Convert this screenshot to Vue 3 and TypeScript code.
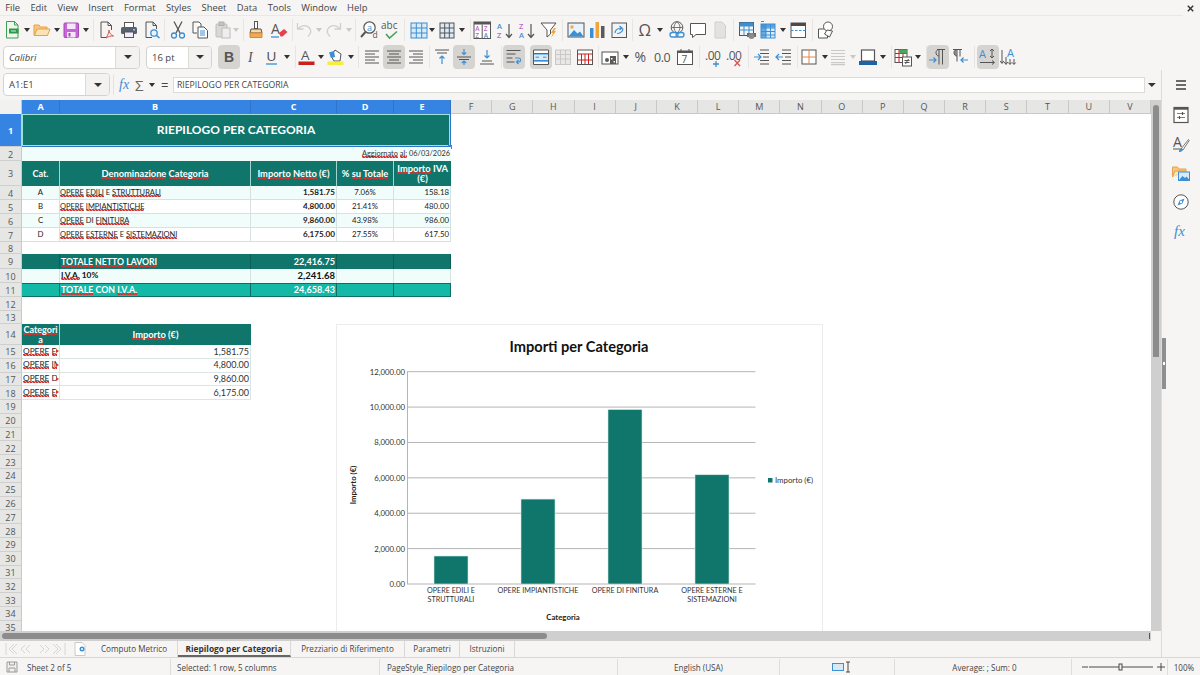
<script setup lang="ts">
type Item = { n: string; c: number; on?: boolean };
const d = '#555';
const b = '#3b8fd4';
const ff = `font-family="Open Sans, sans-serif"`;
const I: Record<string, string> = {
  new: `<path d="M4.500 1.500h8l3.500 3.500v13H4.500z" fill="#eef8f0" stroke="#3f9f52"/><path d="M12.500 1.500V5H16" fill="none" stroke="#3f9f52"/><rect x="7" y="8.500" width="9.500" height="5" fill="#2e9a48"/><path d="M9 11h5" stroke="#cfeed6"/>`,
  open: `<path d="M2 15.500V5h5l1.500 2H15v8.500z" fill="#f8c67e" stroke="#e4a24a"/><path d="M2.500 15.500 5 9h13l-2.500 6.500z" fill="#fde2b4" stroke="#e4a24a"/>`,
  save: `<rect x="3" y="3" width="14.500" height="14.500" rx="1" fill="#c766d6" stroke="#a44bb5"/><rect x="6" y="3.500" width="8.500" height="5.500" fill="#f6e6f9"/><rect x="6" y="12" width="8.500" height="5.500" fill="#f6e6f9"/><rect x="7.500" y="13" width="2" height="3.500" fill="#a44bb5"/>`,
  pdf: `<path d="M5 2h7l3.500 3.500V10M5 2v15.500h6" fill="none" stroke="${d}"/><path d="M12 2v3.500h3.500" fill="none" stroke="${d}"/><path d="M10 18c2-3 3-6 3-8 0 3 2 5 4.500 6-2.500-.3-5 .5-7.500 2z" fill="none" stroke="#d9534f"/>`,
  print: `<rect x="5.500" y="2.500" width="9" height="5" fill="#fff" stroke="${d}"/><rect x="2" y="7" width="16" height="7" rx="1.500" fill="#56636e"/><rect x="5.500" y="12" width="9" height="5.500" fill="#eef" stroke="${d}"/><rect x="14" y="9" width="2" height="1.500" fill="#8fc4ea"/>`,
  preview: `<path d="M4 2h7l3.500 3.500V9M4 2v15.500h6" fill="none" stroke="${d}"/><path d="M11 2v3.500h3.500" fill="none" stroke="${d}"/><circle cx="12" cy="13" r="3.200" fill="#e8f3fb" stroke="${b}" stroke-width="1.300"/><path d="m14.500 15.500 3 2.500" stroke="${b}" stroke-width="1.600"/>`,
  cut: `<path d="M6 1.500 12 13M14 1.500 8 13" stroke="${d}" stroke-width="1.300" fill="none"/><circle cx="6" cy="15.500" r="2.500" fill="none" stroke="${b}" stroke-width="1.300"/><circle cx="14" cy="15.500" r="2.500" fill="none" stroke="${b}" stroke-width="1.300"/>`,
  copy: `<path d="M3 2h6l2 2v3M3 2v11h4" fill="#fff" stroke="${d}"/><path d="M8 7h6l3.500 3.500V18H8z" fill="#fff" stroke="${d}"/><path d="M10 11h5M10 13h5M10 15h5" stroke="${b}"/>`,
  paste: `<rect x="3" y="4" width="11" height="13" rx="1" fill="#d8d8d8" stroke="#bdbdbd"/><rect x="6" y="2" width="5" height="3.500" fill="#c4c4c4" stroke="#b0b0b0"/><rect x="9" y="8" width="8" height="10" fill="#eee" stroke="#bdbdbd"/>`,
  clone: `<rect x="8.500" y="1.500" width="3" height="7" fill="#fff" stroke="${d}"/><path d="M5 9h10l1 4H4z" fill="#f9d9a8" stroke="${d}"/><path d="M4 13h12v4.500H4z" fill="#f4a950" stroke="#d98a2e"/>`,
  clear: `<text x="2" y="14" font-size="14" fill="${d}" ${ff}>A</text><path d="M2 17h8" stroke="${b}" stroke-width="1.300"/><path d="m10 13 5-4 3.500 3-5 4.500h-2z" fill="#e2434a"/>`,
  undo: `<path d="M3.500 3v6h6M4 9c3-4 8-4.500 11-1.500 2.500 2.500 2 6-1 9" fill="none" stroke="#cfcfcf" stroke-width="1.300"/>`,
  redo: `<path d="M16.500 3v6h-6M16 9c-3-4-8-4.500-11-1.500-2.500 2.500-2 6 1 9" fill="none" stroke="#cfcfcf" stroke-width="1.300"/>`,
  find: `<circle cx="10.500" cy="7.500" r="5.700" fill="#fff" stroke="${d}" stroke-width="1.200"/><path d="m6.500 12-4.500 5" stroke="${d}" stroke-width="2"/><text x="8" y="10.500" font-size="9" fill="${b}" ${ff}>a</text><text x="13.500" y="18" font-size="8.500" fill="${d}" ${ff}>d</text>`,
  spell: `<text x="0" y="9" font-size="10" fill="${d}" ${ff}>abc</text><path d="m5 14 3.500 4L16 11.500" fill="none" stroke="#45a35a" stroke-width="1.600"/>`,
  table: `<rect x="2" y="3" width="16" height="15" fill="#dbeaf7" stroke="${b}"/><path d="M7.300 3v15M12.700 3v15M2 8h16M2 13h16" stroke="${b}"/>`,
  cols: `<rect x="3" y="3" width="14" height="15" fill="#dbeaf7" stroke="${d}"/><path d="M7.700 3v15M12.300 3v15M3 8h14M3 13h14" stroke="${d}"/>`,
  sortaz: `<rect x="2" y="2" width="16.500" height="16.500" fill="#fff" stroke="${d}"/><rect x="2" y="2" width="16.500" height="2.500" fill="${d}"/><path d="M10.200 4.500v14" stroke="${d}"/><text x="3.300" y="11" font-size="6.500" fill="#c162c9" ${ff} font-weight="600">A</text><text x="3.300" y="17.500" font-size="6.500" fill="#c162c9" ${ff} font-weight="600">Z</text><text x="11.800" y="11" font-size="6.500" fill="#c162c9" ${ff} font-weight="600">Z</text><text x="11.800" y="17.500" font-size="6.500" fill="${b}" ${ff} font-weight="600">A</text>`,
  asc: `<text x="2" y="9" font-size="7.500" fill="${b}" ${ff} font-weight="600">A</text><text x="2" y="17.500" font-size="7.500" fill="#c162c9" ${ff} font-weight="600">Z</text><path d="M14 4v13M11 14l3 3.500 3-3.500" fill="none" stroke="${d}" stroke-width="1.200"/>`,
  desc: `<text x="2" y="9" font-size="7.500" fill="#c162c9" ${ff} font-weight="600">Z</text><text x="2" y="17.500" font-size="7.500" fill="${b}" ${ff} font-weight="600">A</text><path d="M14 4v13M11 14l3 3.500 3-3.500" fill="none" stroke="${d}" stroke-width="1.200"/>`,
  filter: `<path d="M2 3h15l-5.500 7v4L8 17v-7z" fill="#fff" stroke="${d}"/><path d="M15 8l-3 5h2l-2 5 5-7h-2l2-3z" fill="#f0a43a"/>`,
  image: `<rect x="2" y="3" width="16" height="14" fill="#e8f3fb" stroke="${d}"/><circle cx="6" cy="7" r="1.700" fill="#f4a950"/><path d="M2.500 16.500 8 10l3.500 3.500 2.500-2 3.500 5z" fill="${b}"/>`,
  chart: `<rect x="3" y="8" width="3.500" height="10" fill="${b}"/><rect x="8.500" y="2" width="3.500" height="16" fill="#f0a43a"/><rect x="14" y="6" width="3.500" height="12" fill="#5a5a5a"/>`,
  pivot: `<rect x="3" y="3" width="14.500" height="14.500" fill="#f3f3f3" stroke="${d}"/><path d="M6 13c0-3 3-5 6-5M10.500 6l2.500 2-2.500 2M14 8.500c0 3-3 5-6 5" fill="none" stroke="${b}" stroke-width="1.200"/>`,
  omega: `<text x="2.500" y="16" font-size="16" fill="${d}" ${ff}>Ω</text>`,
  link: `<circle cx="10" cy="7.500" r="5.800" fill="none" stroke="${d}"/><path d="M4.500 7.500h11M10 1.700c-4 3.500-4 8 0 11.500M10 1.700c4 3.500 4 8 0 11.500" fill="none" stroke="${d}" stroke-width=".8"/><rect x="3" y="12.500" width="8" height="4.500" rx="2.200" fill="#fff" stroke="${b}" stroke-width="1.300"/><rect x="9" y="12.500" width="8" height="4.500" rx="2.200" fill="none" stroke="${b}" stroke-width="1.300"/>`,
  comment: `<path d="M2.500 3.500h15v11H8l-3.500 3v-3h-2z" fill="#fff" stroke="${d}"/>`,
  headers: `<path d="M5 2h7l3.500 3.500V18H5z" fill="#e2e2e2" stroke="#cfcfcf"/>`,
  freeze: `<rect x="2.500" y="2.500" width="14" height="13" fill="#f4f4f4" stroke="${d}"/><path d="M2.500 6h14M2.500 10h14M7 2.500v13M12 2.500v13" stroke="${b}"/><rect x="2.500" y="2.500" width="14" height="3.500" fill="${b}"/><path d="M10 13h9v4h-9z" fill="#6a6a6a"/><circle cx="14.500" cy="16" r="3" fill="#8a8a8a"/>`,
  rowscols: `<rect x="3" y="4" width="14" height="14" fill="#dbeaf7" stroke="${b}"/><path d="M3 8h14M3 11.500h14M3 15h14M8 4v14M12.500 4v14" stroke="${b}"/><rect x="3" y="4" width="5" height="14" fill="${b}" opacity=".7"/><rect x="3" y="4" width="14" height="3.500" fill="${b}" opacity=".8"/><path d="M3 1.500h3" stroke="${b}"/>`,
  split: `<rect x="3" y="3" width="14.500" height="14.500" fill="#fff" stroke="${d}"/><rect x="3" y="3" width="14.500" height="3" fill="#4a4a4a"/><path d="M3 10.500h14.500" stroke="${b}" stroke-dasharray="2.500 1.500"/>`,
  shapes: `<path d="M2.500 9h9v9h-9z" fill="#fff" stroke="${d}"/><circle cx="12" cy="6.500" r="4.500" fill="#fff" stroke="${d}"/><path d="m11 10 5.500 1-3 6-5-3z" fill="#fff" stroke="${d}"/>`,
  bold: `<text x="5" y="15" font-size="14" font-weight="700" fill="${d}" font-family="Liberation Sans, sans-serif">B</text>`,
  italic: `<text x="7" y="15" font-size="14" font-style="italic" fill="${d}" font-family="Liberation Serif, serif">I</text>`,
  under: `<text x="4.500" y="14" font-size="13.500" fill="${d}" font-family="Liberation Sans, sans-serif">U</text><path d="M4 17h11" stroke="${b}" stroke-width="1.300"/>`,
  fcolor: `<text x="4" y="13" font-size="13.500" fill="${d}" ${ff}>A</text><rect x="1.500" y="14.500" width="16" height="3.500" fill="#c9211e"/>`,
  hcolor: `<path d="m5 9 4-6 6 4-1 7H8z" fill="#fff" stroke="${d}"/><path d="M3 5.500 8 4l1 6-4 1z" fill="${b}"/><rect x="1.500" y="14.500" width="16" height="3.500" fill="#f5ee3a"/>`,
  left: `<path d="M3 4h14M3 7h10M3 10h14M3 13h10M3 16h14" stroke="${d}" fill="none"/>`,
  center: `<path d="M3 4h14M5 7h10M3 10h14M5 13h10M3 16h14" stroke="${d}" fill="none"/>`,
  right: `<path d="M3 4h14M7 7h10M3 10h14M7 13h10M3 16h14" stroke="${d}" fill="none"/>`,
  top: `<path d="M3 3h14M5 6h10" stroke="${d}"/><path d="M10 17V9M7.500 11.500 10 9l2.500 2.500" fill="none" stroke="${b}" stroke-width="1.200"/>`,
  middle: `<path d="M3 10h14M5 12.500h10" stroke="${d}"/><path d="M10 2v5.500M7.800 5.500 10 7.500l2.200-2M10 18v-4M7.800 16 10 14l2.200 2" fill="none" stroke="${b}" stroke-width="1.200"/>`,
  bottom: `<path d="M3 17h14M5 14h10" stroke="${d}"/><path d="M10 3v8M7.500 8.500 10 11l2.500-2.500" fill="none" stroke="${b}" stroke-width="1.200"/>`,
  wrap: `<path d="M2.500 3.500h14M2.500 7h9M2.500 11h6M2.500 15h8" stroke="${d}" fill="none"/><path d="M11 11h4c2 0 2 4 0 4h-2M14.500 13l-2 2 2 2" fill="none" stroke="${b}" stroke-width="1.200"/>`,
  merge: `<rect x="2.500" y="3" width="15" height="14.500" fill="#fff"/><path d="M2.500 6.500h15M2.500 14h15" stroke="${d}"/><rect x="2.500" y="7" width="15" height="6.500" fill="#dbeaf7" stroke="${b}"/><path d="M4.500 10.200H8M15.500 10.200H12" stroke="${b}"/><path d="M2.500 3h15v14.500h-15z" fill="none" stroke="${d}"/>`,
  unmerge: `<rect x="2.500" y="3" width="15" height="14.500" fill="#e8e8e8" stroke="#c8c8c8"/><path d="M2.500 7.500h15M2.500 12h15M7.500 3v14.500M12.500 3v14.500" stroke="#c8c8c8"/>`,
  redtab: `<rect x="2.500" y="3" width="15" height="14.500" fill="#fff" stroke="${d}"/><path d="M2.500 7h15M6.500 7v10M10 7v10M13.500 7v10" stroke="#c9211e"/><path d="M2.500 13h15" stroke="#c9211e"/>`,
  numfmt: `<rect x="1" y="5" width="16" height="12" fill="#fff" stroke="${d}"/><circle cx="6" cy="13" r="2" fill="#5a5a5a"/><rect x="9" y="9" width="6" height="8" fill="#5a5a5a"/><rect x="10" y="11" width="1.500" height="1.500" fill="#fff"/><rect x="12.500" y="14" width="1.500" height="1.500" fill="#fff"/>`,
  percent: `<text x="3.500" y="15" font-size="14" fill="${d}" ${ff}>%</text>`,
  num: `<text x="1" y="15" font-size="12.500" letter-spacing="-.5" fill="${d}" ${ff}>0.0</text>`,
  date: `<rect x="2.500" y="4" width="15" height="13.500" fill="#fff" stroke="${d}"/><rect x="2.500" y="4" width="15" height="2" fill="${d}"/><path d="M6 2v3M14 2v3" stroke="${d}"/><text x="6.500" y="15.500" font-size="10" fill="${d}" ${ff}>7</text>`,
  adddec: `<text x="2" y="13" font-size="12" letter-spacing="-.5" fill="${d}" ${ff}>.00</text><path d="M13 14v6M10 17h6" stroke="${b}" stroke-width="1.300"/>`,
  deldec: `<text x="2" y="13" font-size="12" letter-spacing="-.5" fill="${d}" ${ff}>.00</text><path d="m10.500 13 5.500 6M16 13l-5.500 6" stroke="#d9534f" stroke-width="1.300"/>`,
  indent: `<path d="M8 3h9M8 6.500h9M11 10h6M8 13.500h9M8 17h9" stroke="${d}"/><path d="M2 10h7M6 7l3 3-3 3" fill="none" stroke="${b}" stroke-width="1.200"/>`,
  outdent: `<path d="M8 3h9M8 6.500h9M11 10h6M8 13.500h9M8 17h9" stroke="${d}"/><path d="M9 10H2M5 7l-3 3 3 3" fill="none" stroke="${b}" stroke-width="1.200"/>`,
  border: `<rect x="3" y="3" width="14" height="14" fill="#fff" stroke="${d}"/><path d="M10 3v14M3 10h14" stroke="#e0894a"/>`,
  bstyle: `<path d="M3 3.500h14M3 6.500h14M3 9.500h14M3 12.500h14M3 15.500h14" stroke="#c9c9c9"/><path d="M3 17.500h14" stroke="#c9c9c9" stroke-width="1.500"/>`,
  bcolor: `<rect x="3.500" y="3" width="13" height="11" fill="#fff" stroke="${d}" stroke-width="1.200"/><rect x="1" y="14" width="18" height="4" fill="#1c62a8"/>`,
  cond: `<rect x="2" y="2.500" width="12" height="13" fill="#fff" stroke="${d}"/><path d="M2 6.500h12M2 10.500h12M6 2.500v13M10 2.500v13" stroke="#c9211e"/><rect x="6" y="2.500" width="8" height="4" fill="#4aa65c"/><rect x="9.500" y="10" width="9" height="9" fill="#fff" stroke="${d}"/><path d="M11.500 13.500h5M11.500 15.500h5M15.500 12l-3 5" stroke="${d}" fill="none"/>`,
  ltr: `<path d="M9 2.500h8M11 2.500v15M14.500 2.500v15" stroke="${d}" fill="none"/><path d="M11 2.500C7 2.500 7 9 11 9" fill="none" stroke="${d}"/><path d="M1 13h7M5.500 10.500 8 13l-2.500 2.500" fill="none" stroke="${b}" stroke-width="1.200"/>`,
  rtl: `<path d="M3 2.500h9M7 2.500v12M10 2.500v7" stroke="${d}" fill="none"/><path d="M7 2.500C3 2.500 3 9 7 9" fill="#8a8a8a" stroke="${d}"/><path d="M18 13h-7M13.500 10.500 11 13l2.500 2.500" fill="none" stroke="${b}" stroke-width="1.200"/>`,
  htext: `<text x="1" y="11" font-size="11" fill="${b}" ${ff}>A</text><path d="M14 2v9M12 4l2-2 2 2M12 9l2 2 2-2" fill="none" stroke="${d}"/><path d="M2 15.500h14M14 13.500l2.500 2-2.500 2" fill="none" stroke="${d}"/>`,
  vtext: `<text x="8" y="10" font-size="11" fill="${b}" ${ff}>A</text><path d="M3 3v13M1.200 14 3 16.500 4.800 14M7 10v7M5.200 15 7 17.500 8.800 15M11 12v5M9.300 15.500 11 17.500l1.700-2M15 12v5M13.300 15.500 15 17.500l1.700-2" fill="none" stroke="${d}"/>`,
  props: `<rect x="3" y="2.500" width="14" height="15" fill="#fff" stroke="${d}" stroke-width="1.200"/><rect x="3" y="2.500" width="14" height="2.200" fill="${d}"/><path d="M6 8.500h8M6 12.500h8" stroke="${b}" stroke-width="1.200"/><path d="M11.500 7v3M8.500 11v3" stroke="${d}" stroke-width="1.200"/>`,
  styles: `<text x="2" y="13" font-size="14" fill="${d}" ${ff}>A</text><path d="M2 15h8" stroke="${d}"/><path d="m10 15 7.500-9.500.800.800L12 16z" fill="#fff" stroke="${d}" stroke-width=".8"/><path d="M8 16.500c1.500-2.500 3-2.500 4-1.500 0 2-2.500 3.500-4 3z" fill="${b}"/>`,
  gallery: `<path d="M1.500 14V4h5l1.500 2h7v3" fill="#f8c67e" stroke="#e4a24a"/><path d="M1.500 14 4 8h10" fill="#fde2b4" stroke="#e4a24a"/><rect x="7.500" y="9" width="11" height="8.500" fill="#dbeaf7" stroke="${b}"/><path d="M8 17l3.500-4 2.500 2 1.500-1.500 3 3.500z" fill="${b}"/>`,
  nav: `<circle cx="10" cy="10" r="7.200" fill="#fff" stroke="${d}"/><path d="m13.500 6.500-2 5-5 2 2-5z" fill="${b}"/><circle cx="10" cy="10" r="1.200" fill="#fff"/>`,
  fx: `<text x="3" y="15" font-size="15" font-style="italic" fill="${b}" font-family="Liberation Serif, serif">fx</text>`,
};

function place(list: Item[], start = 0) {
  let x = start;
  return list.map((it) => {
    const isArrow = it.n === 'a' || it.n === 'ad';
    const w = it.n === 'sep' ? 1 : isArrow ? 7 : 22;
    const ml = it.c - w / 2 - x;
    x = it.c + w / 2;
    return { ...it, w, ml, isArrow };
  });
}
const a = (c: number): Item => ({ n: 'a', c });
const ad = (c: number): Item => ({ n: 'ad', c });
const s = (c: number): Item => ({ n: 'sep', c });
const i = (n: string, c: number, on = false): Item => ({ n, c, on });

const bar1 = place([
  i('new', 12), a(27), i('open', 42), a(57), i('save', 71), a(86), s(93),
  i('pdf', 106), i('print', 129), i('preview', 152), s(164),
  i('cut', 178), i('copy', 200), i('paste', 223), ad(236), s(243),
  i('clone', 256), i('clear', 279), s(292),
  i('undo', 304), ad(319), i('redo', 334), ad(349), s(355),
  i('find', 369), i('spell', 391), s(404),
  i('table', 419), a(432), i('cols', 447), a(462), s(470),
  i('sortaz', 482), i('asc', 505), i('desc', 527), i('filter', 549), s(562),
  i('image', 576), i('chart', 597), i('pivot', 619), s(632),
  i('omega', 646), a(660), i('link', 677), i('comment', 698), i('headers', 720), s(733),
  i('freeze', 747), i('rowscols', 768), a(783), i('split', 798), s(812), i('shapes', 826),
]);
const bar2 = place([
  i('bold', 229, true), i('italic', 251), i('under', 272), a(287), s(295),
  i('fcolor', 307), a(321), i('hcolor', 336), a(351), s(358),
  i('left', 372), i('center', 394, true), i('right', 416), s(429),
  i('top', 442), i('middle', 464, true), i('bottom', 487), s(501),
  i('wrap', 514, true), i('merge', 541, true), i('unmerge', 563), i('redtab', 585), s(598),
  i('numfmt', 611), a(626), i('percent', 641), i('num', 663), i('date', 685), s(699),
  i('adddec', 713), i('deldec', 734), s(748),
  i('indent', 762), i('outdent', 784), s(797),
  i('border', 809), a(825), i('bstyle', 838), ad(853), i('bcolor', 868), a(883), s(891),
  i('cond', 903), a(918), s(926),
  i('ltr', 938, true), i('rtl', 960), s(974),
  i('htext', 988, true), i('vtext', 1009),
], 212);

const menus = ['File', 'Edit', 'View', 'Insert', 'Format', 'Styles', 'Sheet', 'Data', 'Tools', 'Window', 'Help'];
const sideIcons = ['props', 'styles', 'gallery', 'nav', 'fx'];

const columns = 'ABCDEFGHIJKLMNOPQRSTUV'.split('').map((l, idx) => ({
  l,
  w: [38, 191, 86, 57, 57][idx] ?? 700 / 17,
  sel: idx < 5,
}));

type Cell = { t: string; cls?: string; span?: number; sq?: boolean };
type Row = { n: number; h: number; cls?: string; sel?: boolean; cells: Cell[] };
const ok = new Set(['E', 'DI', 'PER', '06/03/2026', '(€)', '%', '10%', 'CON', 'Cat.', 'IVA']);
const words = (t: string) => t.split(/( )/);
const bad = (w: string) => w !== ' ' && !ok.has(w);

const dataRow = (n: number, cls: string, l: string, name: string, net: string, pc: string, iva: string): Row => ({
  n, h: 14, cls,
  cells: [
    { t: l, cls: 'ctr' }, { t: name, sq: true, cls: 'name' }, { t: net, cls: 'rt strong' },
    { t: pc, cls: 'ctr' }, { t: iva, cls: 'rt' },
  ],
});
const totalRow = (n: number, h: number, cls: string, name: string, val: string): Row => ({
  n, h, cls,
  cells: [{ t: '' }, { t: name, sq: true }, { t: val, cls: 'rt big' }, { t: '' }, { t: '' }],
});
const subRow = (n: number, name: string, val: string): Row => ({
  n, h: 13.75, cls: 'sub',
  cells: [{ t: name, sq: true, cls: 'clip' }, { t: val, cls: 'rt amt' }],
});

const rows: Row[] = [
  { n: 1, h: 33, cls: 'title', sel: true, cells: [{ t: 'RIEPILOGO PER CATEGORIA', span: 5, cls: 'ctr' }] },
  { n: 2, h: 14, cls: 'note', cells: [{ t: 'Aggiornato al: 06/03/2026', span: 5, cls: 'rt', sq: true }] },
  {
    n: 3, h: 25, cls: 'head',
    cells: [
      { t: 'Cat.', cls: 'ctr cat' }, { t: 'Denominazione Categoria', cls: 'ctr', sq: true },
      { t: 'Importo Netto (€)', cls: 'ctr', sq: true }, { t: '% su Totale', cls: 'ctr', sq: true },
      { t: 'Importo IVA (€)', cls: 'ctr wrap', sq: true },
    ],
  },
  dataRow(4, 'tint', 'A', 'OPERE EDILI E STRUTTURALI', '1,581.75', '7.06%', '158.18'),
  dataRow(5, 'plain', 'B', 'OPERE IMPIANTISTICHE', '4,800.00', '21.41%', '480.00'),
  dataRow(6, 'tint', 'C', 'OPERE DI FINITURA', '9,860.00', '43.98%', '986.00'),
  dataRow(7, 'plain', 'D', 'OPERE ESTERNE E SISTEMAZIONI', '6,175.00', '27.55%', '617.50'),
  { n: 8, h: 12, cells: [] },
  totalRow(9, 15, 'total', 'TOTALE NETTO LAVORI', '22,416.75'),
  totalRow(10, 14, 'vat', 'I.V.A. 10%', '2,241.68'),
  totalRow(11, 14, 'grand', 'TOTALE CON I.V.A.', '24,658.43'),
  { n: 12, h: 14, cells: [] },
  { n: 13, h: 13, cells: [] },
  {
    n: 14, h: 21, cls: 'head sm',
    cells: [{ t: 'Categoria', cls: 'ctr wrap brk', sq: true }, { t: 'Importo (€)', cls: 'ctr', sq: true }],
  },
  subRow(15, 'OPERE EDILI E STRUTTURALI', '1,581.75'),
  subRow(16, 'OPERE IMPIANTISTICHE', '4,800.00'),
  subRow(17, 'OPERE DI FINITURA', '9,860.00'),
  subRow(18, 'OPERE ESTERNE E SISTEMAZIONI', '6,175.00'),
  ...Array.from({ length: 17 }, (_, k): Row => ({ n: 19 + k, h: 13.8, cells: [] })),
];

const ticks = [0, 2000, 4000, 6000, 8000, 10000, 12000].map((v) => ({
  y: 584 - (v / 12000) * 212.3,
  label: v.toLocaleString('en-US', { minimumFractionDigits: 2 }),
}));
const bars = [
  { x: 434, v: 1581.75, l: ['OPERE EDILI E', 'STRUTTURALI'] },
  { x: 521, v: 4800, l: ['OPERE IMPIANTISTICHE'] },
  { x: 608, v: 9860, l: ['OPERE DI FINITURA'] },
  { x: 695, v: 6175, l: ['OPERE ESTERNE E', 'SISTEMAZIONI'] },
].map((r) => ({ ...r, y: 584 - (r.v / 12000) * 212.3, h: (r.v / 12000) * 212.3 }));

const tabs = [
  { t: 'Computo Metrico', w: 87 },
  { t: 'Riepilogo per Categoria', w: 113, on: true },
  { t: 'Prezziario di Riferimento', w: 114 },
  { t: 'Parametri', w: 55 },
  { t: 'Istruzioni', w: 55 },
];
</script>

<template>
  <div class="app">
    <header class="menubar">
      <span v-for="m in menus" :key="m" class="menu">{{ m }}</span>
      <svg class="close" viewBox="0 0 10 10"><path d="M2 2l6 6M8 2l-6 6" stroke="#333" stroke-width="1.600" /></svg>
    </header>

    <div class="toolbar one">
      <template v-for="(it, k) in bar1" :key="k">
        <span v-if="it.n === 'sep'" class="sep" :style="{ marginLeft: it.ml + 'px' }"></span>
        <span v-else-if="it.isArrow" class="arrow" :class="{ dim: it.n === 'ad' }" :style="{ marginLeft: it.ml + 'px' }"></span>
        <span v-else class="btn" :class="{ on: it.on }" :style="{ marginLeft: it.ml + 'px' }">
          <svg viewBox="0 0 20 20" width="20" height="20" v-html="I[it.n]"></svg>
        </span>
      </template>
    </div>

    <div class="toolbar two">
      <div class="combo fontname"><span class="combo-text ital">Calibri</span><span class="combo-btn"><i class="caret"></i></span></div>
      <div class="combo fontsize"><span class="combo-text">16 pt</span><span class="combo-btn"><i class="caret"></i></span></div>
      <template v-for="(it, k) in bar2" :key="k">
        <span v-if="it.n === 'sep'" class="sep" :style="{ marginLeft: it.ml + 'px' }"></span>
        <span v-else-if="it.isArrow" class="arrow" :class="{ dim: it.n === 'ad' }" :style="{ marginLeft: it.ml + 'px' }"></span>
        <span v-else class="btn" :class="{ on: it.on }" :style="{ marginLeft: it.ml + 'px' }">
          <svg viewBox="0 0 20 20" width="20" height="20" v-html="I[it.n]"></svg>
        </span>
      </template>
    </div>

    <div class="workspace">
      <main class="doc">
        <div class="formula">
          <div class="combo namebox"><span class="combo-text">A1:E1</span><span class="combo-btn"><i class="caret"></i></span></div>
          <span class="fsep"></span>
          <span class="fxbtn ital">fx</span>
          <span class="sigma">Σ</span>
          <span class="arrow small"></span>
          <span class="equals">=</span>
          <div class="input">RIEPILOGO PER CATEGORIA</div>
          <span class="arrow big"></span>
        </div>

        <div class="sheetwrap">
          <div class="sheet">
            <div class="colhead">
              <span class="corner"></span>
              <span v-for="c in columns" :key="c.l" class="col" :class="{ sel: c.sel }" :style="{ width: c.w + 'px' }">{{ c.l }}</span>
            </div>
            <div class="grid">
              <div v-for="r in rows" :key="r.n" class="row" :class="r.cls" :style="{ height: r.h + 'px' }">
                <span class="rowhead" :class="{ sel: r.sel }">{{ r.n }}</span>
                <div class="cells">
                  <div
                    v-for="(c, k) in r.cells"
                    :key="k"
                    class="cell"
                    :class="[c.cls, { merged: c.span }]"
                    :style="c.span ? { gridColumn: 'span ' + c.span } : undefined"
                  >
                    <span class="txt"><template v-for="(w, j) in words(c.t)" :key="j"><span :class="{ sq: c.sq && bad(w) }">{{ w }}</span></template></span>
                    <i v-if="c.cls && c.cls.includes('clip')" class="more"></i>
                    <i v-if="r.n === 1" class="handle"></i>
                  </div>
                </div>
              </div>
            </div>

            <svg class="chart" viewBox="337 325 485 307" width="485" height="307">
              <text x="579" y="351.500" text-anchor="middle" class="ct">Importi per Categoria</text>
              <g v-for="t in ticks" :key="t.label">
                <line x1="407" :y1="t.y" x2="755.500" :y2="t.y" stroke="#b5b5b5" />
                <text x="405" :y="t.y + 3" text-anchor="end" class="tl">{{ t.label }}</text>
              </g>
              <line x1="407.500" y1="371.500" x2="407.500" y2="584" stroke="#b5b5b5" />
              <g v-for="r in bars" :key="r.x">
                <rect :x="r.x" :y="r.y" width="34" :height="r.h" fill="#10766c" stroke="#cfe9e4" stroke-width=".6" />
                <text v-for="(l, k) in r.l" :key="k" :x="r.x + 17" :y="592.500 + k * 9.300" text-anchor="middle" class="cl">{{ l }}</text>
              </g>
              <text x="563" y="619.500" text-anchor="middle" class="at">Categoria</text>
              <text transform="translate(356 485) rotate(-90)" text-anchor="middle" class="at">Importo (€)</text>
              <rect x="768" y="478" width="4.500" height="4.500" fill="#10766c" />
              <text x="775" y="483" class="tl">Importo (€)</text>
            </svg>
          </div>
          <div class="vscroll"><span class="vthumb"></span></div>
        </div>

        <div class="hscroll"><span class="hthumb"></span><span class="hgrip"></span></div>

        <div class="tabbar">
          <svg class="tabnav" viewBox="0 0 62 14" width="62" height="14">
            <g fill="none" stroke="#d6d6d6">
              <path d="M1 1v12M9 2 4 7l5 5M12 2 7 7l5 5" />
              <path d="M20 3l-4 4 4 4M25 3l-4 4 4 4M35 3l4 4-4 4M40 3l4 4-4 4" />
              <path d="M48 2l5 5-5 5M51 2l5 5-5 5M60 1v12" />
            </g>
          </svg>
          <svg class="tabadd" viewBox="0 0 12 14" width="12" height="14">
            <path d="M1 .5h7l3 3V13.500H1z" fill="#fff" stroke="#c9c9c9" />
            <circle cx="8" cy="7" r="2.500" fill="#3b8fd4" />
            <circle cx="8" cy="7" r="1" fill="#fff" />
          </svg>
          <span v-for="t in tabs" :key="t.t" class="tab" :class="{ on: t.on }" :style="{ width: t.w + 'px' }">{{ t.t }}</span>
        </div>
      </main>

      <aside class="side">
        <svg class="burger" viewBox="0 0 12 10" width="12" height="10"><path d="M1 1h10M1 5h10M1 9h10" stroke="#3c3c3c" stroke-width="1.400" /></svg>
        <span v-for="n in sideIcons" :key="n" class="sidebtn">
          <svg viewBox="0 0 20 20" width="20" height="20" v-html="I[n]"></svg>
        </span>
        <span class="grip"><i></i></span>
      </aside>
    </div>

    <footer class="status">
      <span class="seg s1">
        <svg viewBox="0 0 12 12" width="12" height="12"><path d="M1 1h10v10H1z" fill="#f0f0f0" stroke="#9a9a9a" /><path d="M3.500 1v3h5V1M3 11V7h6v4" fill="none" stroke="#9a9a9a" /></svg>
        <span class="stext">Sheet 2 of 5</span>
      </span>
      <span class="seg s2">Selected: 1 row, 5 columns</span>
      <span class="seg s3">PageStyle_Riepilogo per Categoria</span>
      <span class="seg s4">English (USA)</span>
      <span class="seg s5">
        <svg viewBox="0 0 20 12" width="20" height="12"><rect x=".5" y="2.500" width="11" height="7" fill="#d8e8f4" stroke="#3b8fd4" /><path d="M14 1h4M16 1v10M14 11h4" stroke="#4a4a4a" fill="none" /></svg>
      </span>
      <span class="seg s6">Average: ; Sum: 0</span>
      <span class="seg s7">
        <svg viewBox="0 0 86 12" width="86" height="12">
          <path d="M1 6h6M76 6h8M80 2v8M8 6h64" stroke="#4a4a4a" fill="none" />
          <rect x="38" y="3" width="3" height="6" fill="#eee" stroke="#4a4a4a" />
        </svg>
      </span>
      <span class="seg s8">100%</span>
    </footer>
  </div>
</template>

<style>
html, body { margin: 0; padding: 0; background: #f6f5f4; }
</style>

<style scoped>
.app {
  width: 1200px; height: 675px; overflow: hidden; display: flex; flex-direction: column;
  background: #f6f5f4; color: #3d3d3d; font-family: "Open Sans", sans-serif; font-size: 9.500px;
}
.menubar {
  height: 16px; box-sizing: border-box; flex: none; display: flex; align-items: center;
  margin-right: 17px; border-bottom: 1px solid #e9e8e6; position: relative;
}
.menu { padding: 0 5.200px; font-size: 9.400px; color: #444; }
.close { position: absolute; right: -12px; top: 4px; width: 9px; height: 9px; }
.toolbar { flex: none; display: flex; align-items: center; }
.toolbar.one { height: 28px; }
.toolbar.two { height: 26px; }
.btn { width: 22px; height: 24px; flex: none; display: flex; align-items: center; justify-content: center; border-radius: 4px; }
.btn svg { overflow: visible; }
.btn.on { background: #d6d4d1; }
.sep { width: 1px; height: 22px; flex: none; background: #e6e5e3; }
.arrow { width: 7px; height: 4px; flex: none; position: relative; }
.arrow::after {
  content: ""; position: absolute; left: 0; top: 0; border-style: solid; border-width: 4px 3.500px 0;
  border-color: #333 transparent transparent;
}
.arrow.dim::after { border-top-color: #c8c8c8; }
.arrow.small { margin: 0 5px 0 3px; }
.arrow.big { margin-left: 4px; transform: scaleX(1.300); }
.combo {
  display: flex; flex: none; height: 23px; background: #fff; border: 1px solid #d4d3d0; border-radius: 4px;
  box-sizing: border-box; overflow: hidden; font-size: 9.500px; color: #444;
}
.combo-text { flex: 1; padding-left: 5px; line-height: 21px; }
.combo-btn { width: 23px; background: #f3f2f0; border-left: 1px solid #dcdbd8; display: flex; align-items: center; justify-content: center; }
.caret { width: 0; height: 0; border-style: solid; border-width: 4px 4px 0; border-color: #333 transparent transparent; }
.ital { font-style: italic; }
.fontname { width: 137px; margin-left: 3px; }
.fontsize { width: 66px; margin-left: 6px; }
.fontsize .combo-btn { width: 22px; }

.workspace { flex: 1; min-height: 0; display: flex; }
.doc { width: 1161px; flex: none; display: flex; flex-direction: column; border-right: 1px solid #dcdbd9; box-sizing: content-box; }
.side { flex: 1; position: relative; display: flex; flex-direction: column; align-items: center; padding-top: 10px; }
.burger { margin-bottom: 10.500px; flex: none; }
.sidebtn { height: 29px; width: 22px; flex: none; display: flex; align-items: center; justify-content: center; }
.sidebtn svg { overflow: visible; }
.grip { position: absolute; left: 0; top: 268px; width: 4px; height: 51px; background: #8f8f8f; }
.grip i { position: absolute; left: 1px; top: 24px; width: 2px; height: 3px; background: #fff; }

.formula { height: 30px; flex: none; display: flex; align-items: center; padding-bottom: 1px; box-sizing: border-box; }
.namebox { width: 107px; margin-left: 3px; }
.fsep { width: 1px; height: 20px; background: #e2e1df; margin-left: 3px; }
.fxbtn { font-family: "Liberation Serif", serif; font-size: 14px; color: #3b8fd4; margin-left: 5px; width: 16px; }
.sigma { font-size: 15px; line-height: 16px; color: #666; width: 11px; }
.equals { font-size: 13px; color: #444; width: 12px; }
.input {
  width: 972px; height: 16px; line-height: 15px; background: #fff; border: 1px solid #dcdbd8; box-sizing: border-box;
  padding-left: 3px; font-size: 8.700px; color: #444;
}

.sheetwrap { flex: 1; min-height: 0; display: flex; }
.sheet { width: 1151px; flex: none; background: #fff; position: relative; overflow: hidden; font-family: Lato, sans-serif; }
.colhead { display: flex; height: 14px; }
.corner { width: 22px; flex: none; background: #f1f1ef; border-right: 1px solid #c9c9c9; box-sizing: border-box; }
.col {
  flex: none; box-sizing: border-box; text-align: center; background: #e6e6e4; border-right: 1px solid #c9c9c9; border-bottom: 1px solid #c9c9c9;
  line-height: 13px; font-size: 9px; font-family: "Open Sans", sans-serif; color: #555;
}
.col.sel { background: #3584e4; color: #fff; font-weight: 700; border-right-color: #2f74cb; border-bottom-color: #3584e4; }
.row { display: flex; box-sizing: border-box; }
.rowhead {
  width: 22px; flex: none; box-sizing: border-box; background: #e6e6e4; border-right: 1px solid #c9c9c9; border-bottom: 1px solid #cfcfcf;
  font: 9px "Open Sans", sans-serif; color: #555; display: flex; align-items: center; justify-content: center; padding-top: 1px;
}
.rowhead.sel { background: #3584e4; color: #fff; font-weight: 700; }
.cells { display: grid; grid-template-columns: 38px 191px 86px 57px 57px; width: 429px; }
.cell {
  position: relative; box-sizing: border-box; display: flex; align-items: center; padding: 0 1px; min-width: 0;
  font-size: 7.800px; line-height: 9.500px; color: #222; white-space: pre; overflow: hidden;
}
.cell.ctr { justify-content: center; text-align: center; }
.cell.rt { justify-content: flex-end; text-align: right; }
.cell.wrap { white-space: pre-wrap; }
.cell.brk { word-break: break-all; }
.cell.name { font-size: 7.500px; padding-left: 0; }
.sq {
  background-image:
    linear-gradient(45deg, transparent 38%, #d8322e 38%, #d8322e 62%, transparent 62%),
    linear-gradient(-45deg, transparent 38%, #d8322e 38%, #d8322e 62%, transparent 62%);
  background-size: 3px 2px;
  background-position: 0 100%, 1.500px 100%;
  background-repeat: repeat-x;
}
.strong { font-weight: 700; font-size: 8.100px; }

.title .cell {
  background: #10766c; color: #fff; font-weight: 700; font-size: 12px; overflow: visible;
  box-shadow: inset 0 0 0 1px #9fe3d8; border-bottom: 1.500px solid #2f74cb; border-right: 1px solid #2f74cb;
}
.handle { position: absolute; right: -2px; bottom: -3px; width: 4px; height: 4px; background: #3584e4; }
.note .cell { background: #f0fdfa; font-size: 7.400px; color: #333; }
.head .cell {
  background: #10766c; color: #fff; font-weight: 700; font-size: 9.300px; border-right: 1px solid #9fd6cf;
}
.head .cell:last-child { border-right: 0; }
.head .cell.cat { font-size: 9px; }
.head.sm .cell { font-size: 9.300px; }
.head.sm .cell.brk { font-size: 9px; padding: 0; }
.tint .cell, .plain .cell { border-right: 1px solid #d6e2e0; border-bottom: 1px solid #d6e2e0; }
.tint .cell { background: #f0fdfa; }
.plain .cell { background: #fff; }
.total .cell { background: #10766c; color: #fff; font-weight: 700; font-size: 8.700px; border-right: 1px solid #0c5f57; }
.vat .cell { background: #f0fdfa; color: #111; font-weight: 700; font-size: 8.300px; border-right: 1px solid #d6e2e0; }
.grand .cell { background: #14b8a6; color: #fff; font-weight: 700; font-size: 8.800px; border-right: 1px solid #0c6f66; border-top: 1px solid #0c6f66; border-bottom: 1px solid #0c6f66; }
.cell.big { font-size: 9.100px; }
.vat .cell.big { font-size: 9.500px; }
.sub .cell { border-right: 1px solid #dde5e4; border-bottom: 1px solid #dde5e4; font-size: 8.300px; }
.sub .cell.amt { font-size: 9px; color: #333; }
.cell.clip { padding-right: 2px; }
.clip .txt { overflow: hidden; }
.more { position: absolute; right: 0; top: 4px; border-style: solid; border-width: 2.500px 0 2.500px 3px; border-color: transparent transparent transparent #d8322e; }

.chart { position: absolute; left: 337px; top: 225px; background: #fff; outline: 1px solid #ececec; font-family: Lato, sans-serif; }
.ct { font-size: 14.600px; font-weight: 700; fill: #111; }
.tl { font-size: 7.800px; fill: #333; }
.cl { font-size: 7.200px; fill: #333; }
.at { font-size: 7.800px; font-weight: 700; fill: #222; }

.vscroll { width: 10px; flex: none; background: #cfcfcf; position: relative; }
.vthumb { position: absolute; left: 2px; width: 6px; top: 5px; height: 252px; background: #8c8c8c; border-radius: 3px 3px 0 0; }
.hscroll { height: 10px; flex: none; background: #cfcfcf; position: relative; margin-right: 10px; }
.hthumb { position: absolute; left: 2px; width: 545px; top: 2px; height: 6px; background: #8c8c8c; border-radius: 3px; }
.hgrip { position: absolute; right: 1px; top: 2px; width: 1px; height: 6px; background: #555; }
.tabbar { height: 16px; flex: none; display: flex; align-items: center; padding-left: 5px; }
.tabnav { flex: none; }
.tabadd { flex: none; margin-left: 7px; margin-right: 5px; }
.tab {
  flex: none; height: 16px; line-height: 15px; font-size: 8.100px; text-align: center; box-sizing: border-box; border-right: 1px solid #d9d8d6; color: #444;
}
.tab.on { font-weight: 700; font-size: 8.350px; border-bottom: 2px solid #666; color: #333; }

.status { height: 17px; flex: none; display: flex; align-items: center; border-top: 1px solid #d8d7d5; font-size: 8.050px; color: #444; }
.seg { height: 16px; box-sizing: border-box; border-right: 1px solid #dedddb; flex: none; display: flex; align-items: center; padding-top: 1px; }
.s1 { width: 171px; padding-left: 6px; }
.stext { margin-left: 9px; }
.s2 { width: 209px; padding-left: 6px; }
.s3 { width: 238px; padding-left: 7px; }
.s4 { width: 162px; justify-content: center; }
.s5 { width: 115px; padding-left: 52px; }
.s6 { width: 177px; justify-content: center; padding-left: 3px; }
.s7 { width: 96px; padding-left: 9px; }
.s8 { flex: 1; border-right: 0; justify-content: center; }
</style>
